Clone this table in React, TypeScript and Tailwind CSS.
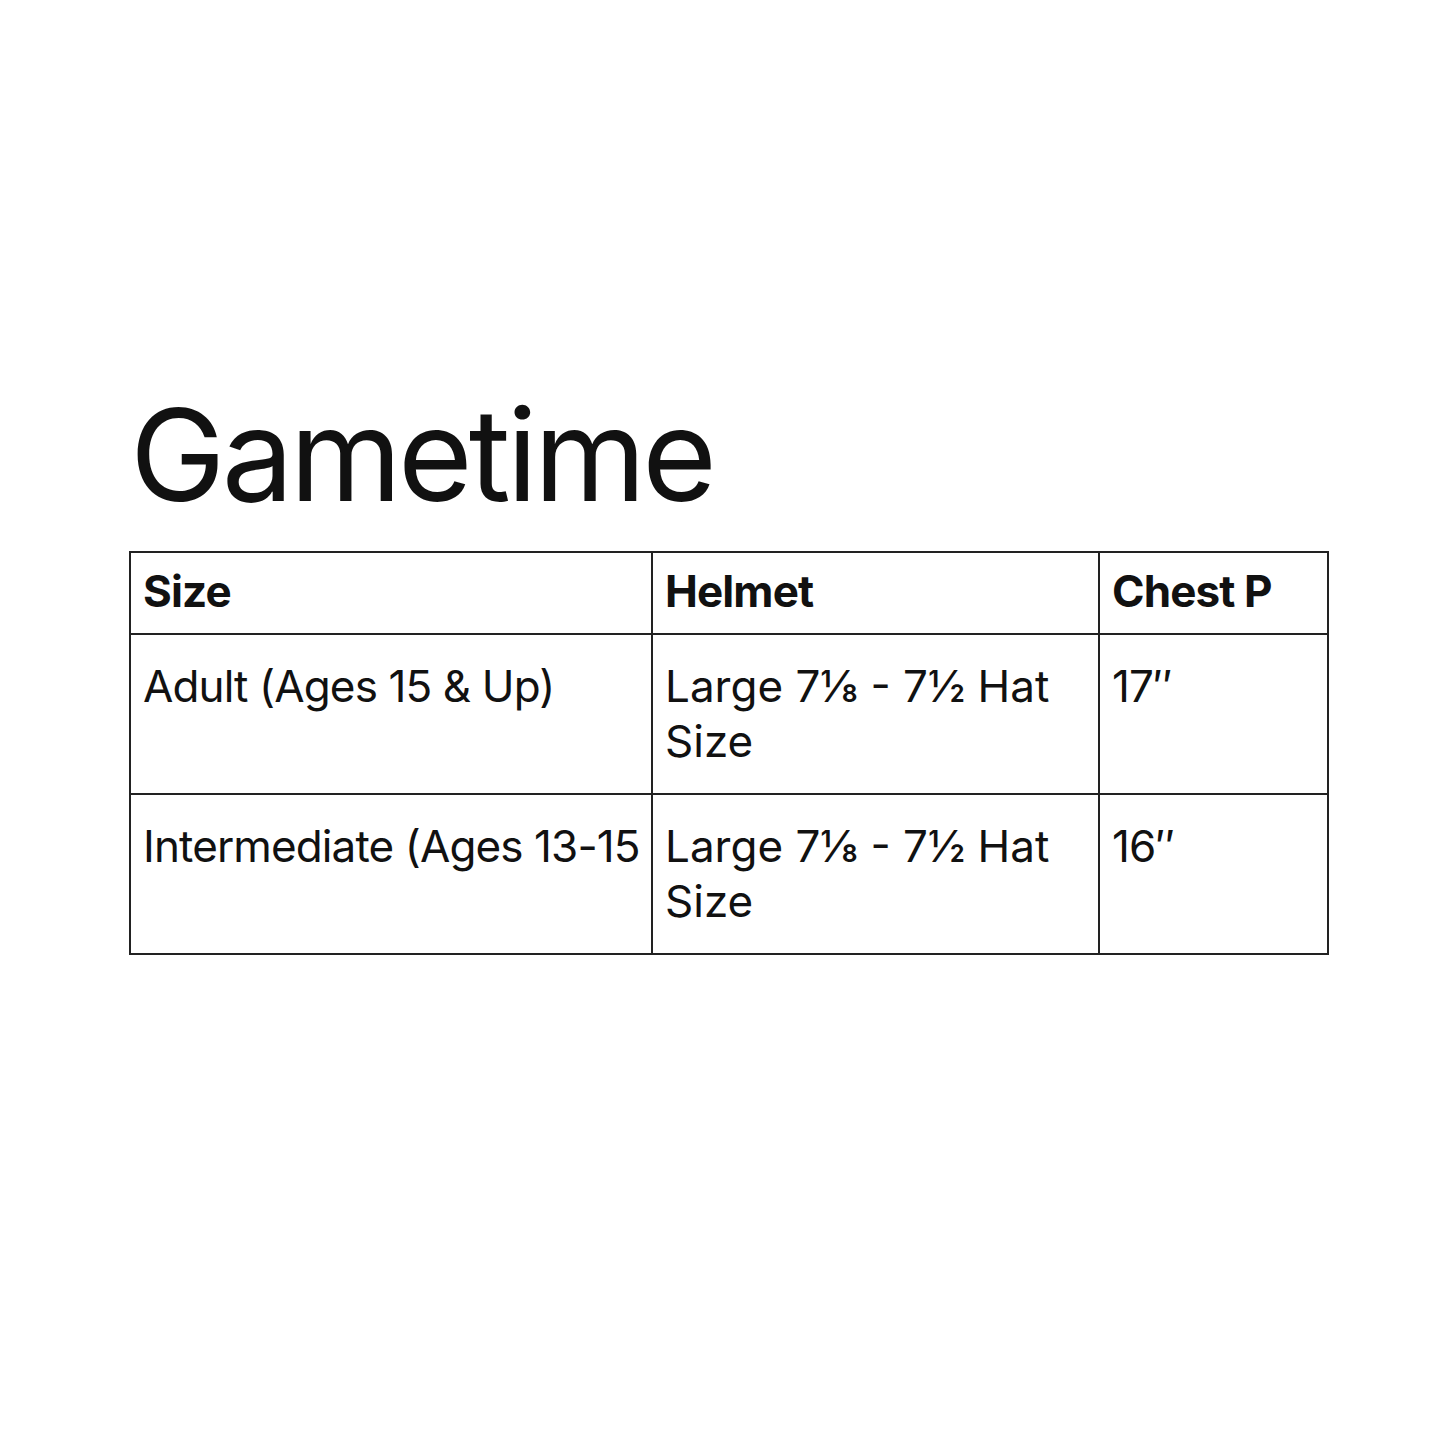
export default function App() {
  const rows = [
    { size: 'Adult (Ages 15 & Up)', helmet: 'Large 7⅛ - 7½ Hat Size', chest: '17″' },
    { size: 'Intermediate (Ages 13-15', helmet: 'Large 7⅛ - 7½ Hat Size', chest: '16″' },
  ];

  return (
    <div className="min-h-[1445px] w-[1445px] bg-white text-[#111] font-['Inter',sans-serif]">
      <div className="pl-[129px] pt-[391px]">
        <h1 className="text-[128px] leading-none font-normal tracking-[-0.03em] pl-[1px]">Gametime</h1>
        <table className="mt-[32px] w-[1198px] table-fixed border-collapse text-[44px] leading-[55px] tracking-[-0.02em]">
          <colgroup>
            <col className="w-[522px]" />
            <col className="w-[447px]" />
            <col className="w-[229px]" />
          </colgroup>
          <thead>
            <tr className="h-[82px]">
              <th className="border-2 border-[#222] px-[12px] pb-[3px] text-left font-bold align-middle whitespace-nowrap overflow-hidden">Size</th>
              <th className="border-2 border-[#222] px-[12px] pb-[3px] text-left font-bold align-middle whitespace-nowrap overflow-hidden">Helmet</th>
              <th className="border-2 border-[#222] px-[12px] pb-[3px] text-left font-bold align-middle whitespace-nowrap overflow-hidden">Chest P</th>
            </tr>
          </thead>
          <tbody>
            {rows.map((r) => (
              <tr key={r.size} className="h-[160px]">
                <td className="border-2 border-[#222] px-[12px] pt-[24px] align-top whitespace-nowrap overflow-hidden">{r.size}</td>
                <td className="border-2 border-[#222] px-[12px] pt-[24px] align-top tracking-normal">{r.helmet}</td>
                <td className="border-2 border-[#222] px-[12px] pt-[24px] align-top whitespace-nowrap overflow-hidden">{r.chest}</td>
              </tr>
            ))}
          </tbody>
        </table>
      </div>
    </div>
  );
}
